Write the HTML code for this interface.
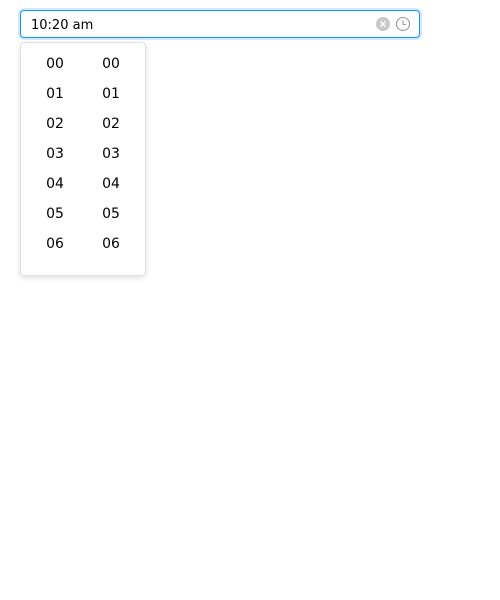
<!DOCTYPE html><html><head><style>
body{margin:0;background:#fff;font-family:"DejaVu Sans","Liberation Sans",sans-serif;}
.inp{position:absolute;left:20px;top:10px;width:398px;height:26px;border:1px solid #1890ff;border-radius:4px;box-shadow:0 0 0 2px rgba(24,144,255,0.2);}
.inp span{position:absolute;left:10px;top:7px;font-size:13px;color:#000;}
.dd{position:absolute;left:20px;top:42px;width:124px;height:232px;border:1px solid #e0e0e0;border-radius:4px;box-shadow:0 2px 6px rgba(0,0,0,0.12);}
.col{position:absolute;top:6px;width:56px;text-align:center;font-size:14px;color:#000;}
.col div{height:30px;line-height:30px;}
</style></head><body>
<div class="inp"><span>10:20 am</span>
<svg style="position:absolute;left:355px;top:6px" width="15" height="15"><circle cx="7" cy="7" r="7" fill="#c8c8c8"/><path d="M4.5 4.5L9.5 9.5M9.5 4.5L4.5 9.5" stroke="#fff" stroke-width="1.5"/></svg>
<svg style="position:absolute;left:374px;top:5px" width="16" height="16"><circle cx="8" cy="8" r="6.5" fill="none" stroke="#999" stroke-width="1.1"/><path d="M8 4.5V8.5H11" fill="none" stroke="#999" stroke-width="1.1"/></svg>
</div>
<div class="dd">
<div class="col" style="left:6px"><div>00</div><div>01</div><div>02</div><div>03</div><div>04</div><div>05</div><div>06</div></div>
<div class="col" style="left:62px"><div>00</div><div>01</div><div>02</div><div>03</div><div>04</div><div>05</div><div>06</div></div>
</div>
</body></html>
